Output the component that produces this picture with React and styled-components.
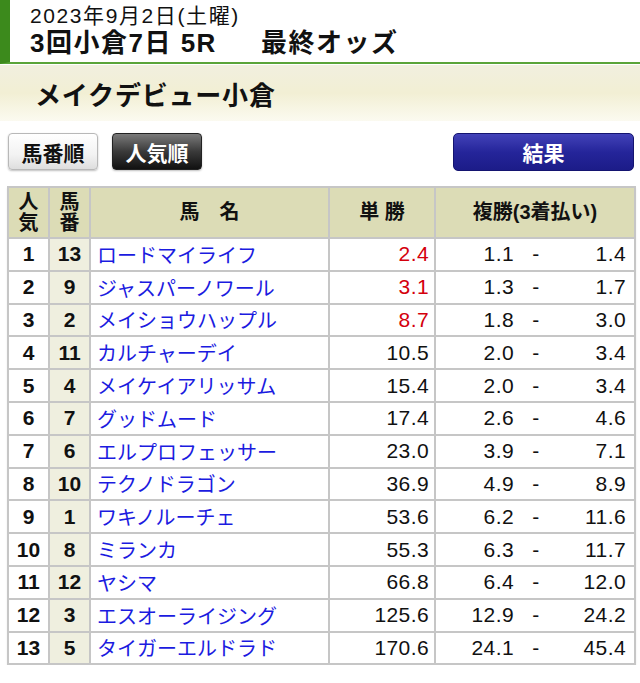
import React from "react";
import styled, { createGlobalStyle } from "styled-components";

const GlobalStyle = createGlobalStyle`
  body {
    margin: 0;
    background: #fff;
    font-family: "Liberation Sans", "Noto Sans CJK JP", sans-serif;
    color: #111;
  }
`;

const rows = [
  [1, 13, "ロードマイライフ", "2.4", "1.1", "1.4"],
  [2, 9, "ジャスパーノワール", "3.1", "1.3", "1.7"],
  [3, 2, "メイショウハップル", "8.7", "1.8", "3.0"],
  [4, 11, "カルチャーデイ", "10.5", "2.0", "3.4"],
  [5, 4, "メイケイアリッサム", "15.4", "2.0", "3.4"],
  [6, 7, "グッドムード", "17.4", "2.6", "4.6"],
  [7, 6, "エルプロフェッサー", "23.0", "3.9", "7.1"],
  [8, 10, "テクノドラゴン", "36.9", "4.9", "8.9"],
  [9, 1, "ワキノルーチェ", "53.6", "6.2", "11.6"],
  [10, 8, "ミランカ", "55.3", "6.3", "11.7"],
  [11, 12, "ヤシマ", "66.8", "6.4", "12.0"],
  [12, 3, "エスオーライジング", "125.6", "12.9", "24.2"],
  [13, 5, "タイガーエルドラド", "170.6", "24.1", "45.4"],
];

export default function App() {
  return (
    <Page>
      <GlobalStyle />
      <Header>
        <DateLine>2023年9月2日(土曜)</DateLine>
        <Title>
          <span>3回小倉7日 5R</span>
          <span className="kind">最終オッズ</span>
        </Title>
      </Header>
      <RaceBand>メイクデビュー小倉</RaceBand>
      <Toolbar>
        <SortButton>馬番順</SortButton>
        <SortButton $active>人気順</SortButton>
        <ResultButton>結果</ResultButton>
      </Toolbar>
      <OddsTable>
        <colgroup>
          <col style={{ width: 41 }} />
          <col style={{ width: 41 }} />
          <col style={{ width: 239 }} />
          <col style={{ width: 106 }} />
          <col style={{ width: 200 }} />
        </colgroup>
        <thead>
          <tr>
            <Th>人<br />気</Th>
            <Th>馬<br />番</Th>
            <Th>馬　名</Th>
            <Th>単 勝</Th>
            <Th>複勝(3着払い)</Th>
          </tr>
        </thead>
        <tbody>
          {rows.map(([pop, num, name, win, min, max]) => (
            <tr key={pop}>
              <NumCell>{pop}</NumCell>
              <NumCell $tinted>{num}</NumCell>
              <NameCell>{name}</NameCell>
              <WinCell $hot={pop <= 3}>{win}</WinCell>
              <PlaceCell>
                <PlaceRange>
                  <span className="min">{min}</span>
                  <span className="dash">-</span>
                  <span className="max">{max}</span>
                </PlaceRange>
              </PlaceCell>
            </tr>
          ))}
        </tbody>
      </OddsTable>
    </Page>
  );
}

const Page = styled.div`
  width: 640px;
`;

const Header = styled.div`
  height: 64px;
  border-left: 10px solid #3c8a1c;
  border-bottom: 2px solid #5aa43a;
  padding-left: 20px;
  box-sizing: border-box;
  display: flex;
  flex-direction: column;
  padding-top: 4px;
`;

const DateLine = styled.div`
  font-size: 21px;
  line-height: 23px;
  letter-spacing: 1.6px;
`;

const Title = styled.div`
  display: flex;
  font-size: 26px;
  font-weight: bold;
  line-height: 32px;
  letter-spacing: 1.5px;

  .kind {
    margin-left: 44px;
  }
`;

const RaceBand = styled.div`
  height: 56px;
  margin-top: 1px;
  padding-left: 35px;
  display: flex;
  align-items: center;
  font-size: 26px;
  font-weight: bold;
  letter-spacing: 0.8px;
  background: linear-gradient(to bottom, #f1efdf 0%, #f2efd4 50%, #fbfaf0 100%);
`;

const Toolbar = styled.div`
  display: flex;
  gap: 14px;
  padding: 12px 6px 0 8px;
  height: 38px;
`;

const SortButton = styled.div`
  width: 90px;
  height: 37px;
  box-sizing: border-box;
  border-radius: 4px;
  display: flex;
  align-items: center;
  justify-content: center;
  font-size: 21px;
  font-weight: bold;
  border: 1px solid ${(p) => (p.$active ? "#222" : "#b8b8b8")};
  color: ${(p) => (p.$active ? "#fff" : "#111")};
  background: ${(p) =>
    p.$active
      ? "linear-gradient(to bottom, #7a7a7a 0%, #3a3a3a 50%, #111 100%)"
      : "linear-gradient(to bottom, #ffffff 0%, #f2f2f2 60%, #dedede 100%)"};
  box-shadow: 0 1px 2px rgba(0, 0, 0, 0.25);
`;

const ResultButton = styled.div`
  margin-left: auto;
  width: 181px;
  height: 38px;
  box-sizing: border-box;
  border-radius: 5px;
  border: 1px solid #141470;
  display: flex;
  align-items: center;
  justify-content: center;
  font-size: 21px;
  font-weight: bold;
  color: #fff;
  background: linear-gradient(to bottom, #4242b8 0%, #25259a 50%, #1c1c88 100%);
`;

const OddsTable = styled.table`
  margin: 15px 0 0 7px;
  width: 627px;
  border-collapse: collapse;
  table-layout: fixed;
  box-shadow: 0 2px 2px rgba(0, 0, 0, 0.08);

  td,
  th {
    border: 2px solid #c6c6c6;
    padding: 0;
  }
  tbody tr {
    height: 32.8px;
  }
`;

const Th = styled.th`
  height: 49px;
  background: #dcdcb6;
  font-size: 20px;
  font-weight: bold;
  line-height: 21px;
  text-align: center;
`;

const NumCell = styled.td`
  text-align: center;
  font-size: 21px;
  font-weight: bold;
  background: ${(p) => (p.$tinted ? "#efefdf" : "#fff")};
`;

const NameCell = styled.td`
  padding-left: 6px !important;
  font-size: 20px;
  color: #1b1be0;
  white-space: nowrap;
  overflow: hidden;
`;

const WinCell = styled.td`
  text-align: right;
  padding-right: 5px !important;
  font-size: 21px;
  letter-spacing: 0.4px;
  color: ${(p) => (p.$hot ? "#d4000c" : "#111")};
`;

const PlaceCell = styled.td`
  font-size: 21px;
  letter-spacing: 0.4px;
`;

const PlaceRange = styled.div`
  display: grid;
  grid-template-columns: 78px 44px 1fr;
  padding-right: 8px;

  .min {
    text-align: right;
  }
  .dash {
    text-align: center;
  }
  .max {
    text-align: right;
  }
`;
